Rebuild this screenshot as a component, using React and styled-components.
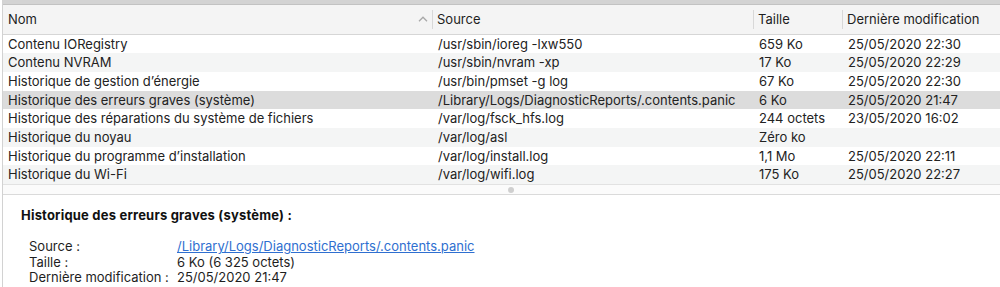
import React from "react";
import styled, { createGlobalStyle } from "styled-components";

const Global = createGlobalStyle`
  html, body { margin: 0; padding: 0; background: #ffffff; overflow: hidden; }
  body { font-family: Inter, "Liberation Sans", Arial, sans-serif; font-size: 13px; color: #262626; }
`;

const Window = styled.div`
  height: 287px;
  display: flex;
  flex-direction: column;
  border-left: 1px solid #d2d2d2;
  margin-left: 2px;
  background: #ffffff;
  overflow: hidden;
  & > * { flex-shrink: 0; }
`;

const TopStrip = styled.div`
  height: 4px;
  background: #d3d3d3;
  border-bottom: 1px solid #c2c2c2;
  margin-left: -3px;
`;

const Grid = styled.div`
  display: grid;
  grid-template-columns: 430px 321px 89px 1fr;
`;

const Header = styled(Grid)`
  height: 28.5px;
  background: #f4f4f4;
  border-bottom: 1px solid #d6d6d6;
  align-items: center;
`;

const HeadCell = styled.div`
  position: relative;
  height: 100%;
  display: flex;
  align-items: center;
  padding-left: ${(p) => (p.$first ? "5px" : "4px")};
  box-sizing: border-box;
  color: #1e1e1e;
  &::before {
    content: "";
    display: ${(p) => (p.$first ? "none" : "block")};
    position: absolute;
    left: -1px;
    top: 5px;
    bottom: 5px;
    width: 1px;
    background: #d8d8d8;
  }
`;

const SortMark = styled.svg`
  position: absolute;
  right: 5px;
  top: 11px;
`;

const Rows = styled.div`
  display: flex;
  flex-direction: column;
`;

const Row = styled(Grid)`
  height: 18.7px;
  align-items: center;
  background: ${(p) => (p.$selected ? "#dcdcdc" : p.$alt ? "#f4f5f5" : "#ffffff")};
`;

const Cell = styled.div`
  padding-left: 5px;
  white-space: nowrap;
  overflow: hidden;
  color: #222222;
  line-height: 18.7px;
`;

const Splitter = styled.div`
  height: 9px;
  border-top: 1px solid #e2e2e2;
  border-bottom: 1px solid #dadada;
  background: #fbfbfb;
  display: flex;
  justify-content: center;
  align-items: center;
`;

const Grip = styled.div`
  width: 6px;
  height: 6px;
  border-radius: 50%;
  background: #cfcfcf;
  margin-left: 18px;
`;

const Details = styled.div`
  padding: 12px 0 0 18px;
`;

const Title = styled.div`
  font-weight: 700;
  color: #111111;
  font-size: 13px;
  letter-spacing: 0.2px;
  line-height: 16px;
  margin-bottom: 16px;
`;

const InfoGrid = styled.div`
  display: grid;
  grid-template-columns: 148px 1fr;
  padding-left: 8px;
  line-height: 15.5px;
  color: #1e1e1e;
`;

const Link = styled.a`
  color: #2f6fd0;
  text-decoration: underline;
  white-space: nowrap;
`;

const Value = styled.div`
  white-space: nowrap;
`;

const rows = [
  ["Contenu IORegistry", "/usr/sbin/ioreg -lxw550", "659 Ko", "25/05/2020 22:30"],
  ["Contenu NVRAM", "/usr/sbin/nvram -xp", "17 Ko", "25/05/2020 22:29"],
  ["Historique de gestion d\u2019énergie", "/usr/bin/pmset -g log", "67 Ko", "25/05/2020 22:30"],
  ["Historique des erreurs graves (système)", "/Library/Logs/DiagnosticReports/.contents.panic", "6 Ko", "25/05/2020 21:47"],
  ["Historique des réparations du système de fichiers", "/var/log/fsck_hfs.log", "244 octets", "23/05/2020 16:02"],
  ["Historique du noyau", "/var/log/asl", "Zéro ko", ""],
  ["Historique du programme d\u2019installation", "/var/log/install.log", "1,1 Mo", "25/05/2020 22:11"],
  ["Historique du Wi-Fi", "/var/log/wifi.log", "175 Ko", "25/05/2020 22:27"],
];

export default function App() {
  return (
    <>
      <Global />
      <Window>
        <TopStrip />
        <Header>
          <HeadCell $first>
            Nom
            <SortMark width="10" height="6" viewBox="0 0 10 6">
              <path d="M1 5.2 L5 1.2 L9 5.2" fill="none" stroke="#a8a8a8" strokeWidth="1.3" />
            </SortMark>
          </HeadCell>
          <HeadCell>Source</HeadCell>
          <HeadCell>Taille</HeadCell>
          <HeadCell>Dernière modification</HeadCell>
        </Header>
        <Rows>
          {rows.map((r, i) => (
            <Row key={i} $alt={i % 2 === 1} $selected={i === 3}>
              {r.map((c, j) => (
                <Cell key={j}>{c}</Cell>
              ))}
            </Row>
          ))}
        </Rows>
        <Splitter>
          <Grip />
        </Splitter>
        <Details>
          <Title>Historique des erreurs graves (système) :</Title>
          <InfoGrid>
            <div>Source :</div>
            <Value>
              <Link href="#">/Library/Logs/DiagnosticReports/.contents.panic</Link>
            </Value>
            <div>Taille :</div>
            <Value>6 Ko (6 325 octets)</Value>
            <div>Dernière modification :</div>
            <Value>25/05/2020 21:47</Value>
            <div>Description :</div>
            <Value>Le fichier contient des informations sur les erreurs graves survenues récemment dans le système et le noyau.</Value>
          </InfoGrid>
        </Details>
      </Window>
    </>
  );
}
